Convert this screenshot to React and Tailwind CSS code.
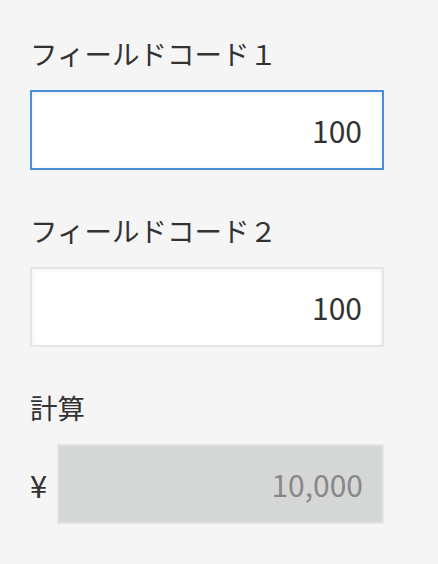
import { useState } from 'react';

const font = { fontFamily: '"Noto Sans CJK JP", "Noto Sans", sans-serif' };

function Field({ label, value, focused }) {
  return (
    <div className="mb-[42px]">
      <div className="h-[36px] mb-[19px] text-[27.5px] leading-[36px] text-[#333333]">{label}</div>
      <input
        readOnly
        value={value}
        className={`block w-[354px] h-[80px] border-2 bg-white text-right pr-[20px] text-[30px] text-[#333333] outline-none shadow-[inset_0_1px_5px_rgba(0,0,0,0.07)] ${
          focused ? 'border-[#4a90d9]' : 'border-[#e3e6e6]'
        }`}
      />
    </div>
  );
}

export default function App() {
  const [fields] = useState([
    { id: 1, label: 'フィールドコード１', value: '100', focused: true },
    { id: 2, label: 'フィールドコード２', value: '100', focused: false },
  ]);

  return (
    <div className="min-h-[564px] w-full bg-[#f5f5f5] pt-[35px] px-[30px]" style={font}>
      {fields.map((f) => (
        <Field key={f.id} label={f.label} value={f.value} focused={f.focused} />
      ))}

      {/* calculated field */}
      <div>
        <div className="h-[36px] mb-[19px] text-[27.5px] leading-[36px] text-[#333333]">計算</div>
        <div className="flex items-center">
          <span className="w-[27px] text-[31px] text-[#333333] leading-none">¥</span>
          <input
            readOnly
            disabled
            value="10,000"
            className="block w-[327px] h-[80px] border-2 border-[#e3e6e6] bg-[#d5d7d6] text-right pr-[19px] text-[30px] text-[#888888] outline-none"
          />
        </div>
      </div>
    </div>
  );
}
